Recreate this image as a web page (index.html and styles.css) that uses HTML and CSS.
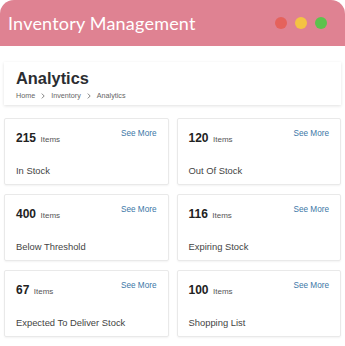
FILE: index.html
```html
<!DOCTYPE html>
<html lang="en">
<head>
    <meta charset="UTF-8">
    <meta name="viewport" content="width=device-width, initial-scale=1.0">
    <title>Inventory Management - Analytics</title>
    <link rel="stylesheet" href="styles.css">
</head>
<body>
    <div class="window">
        <div class="titlebar">
            <span class="app-title">Inventory Management</span>
            <div class="dots">
                <span class="dot red"></span>
                <span class="dot yellow"></span>
                <span class="dot green"></span>
            </div>
        </div>

        <div class="content">
            <div class="page-head">
                <h1>Analytics</h1>
                <div class="crumbs">
                    <span>Home</span>
                    <svg class="chev" width="4" height="6" viewBox="0 0 4 6"><polyline points="0.8,0.6 3.2,3 0.8,5.4" fill="none" stroke="#777" stroke-width="0.9"/></svg>
                    <span>Inventory</span>
                    <svg class="chev" width="4" height="6" viewBox="0 0 4 6"><polyline points="0.8,0.6 3.2,3 0.8,5.4" fill="none" stroke="#777" stroke-width="0.9"/></svg>
                    <span>Analytics</span>
                </div>
            </div>

            <div class="stats">
                <div class="stat-card">
                    <div class="stat-top">
                        <div class="count"><b>215</b> <span>Items</span></div>
                        <a href="#" class="more">See More</a>
                    </div>
                    <div class="label">In Stock</div>
                </div>
                <div class="stat-card">
                    <div class="stat-top">
                        <div class="count"><b>120</b> <span>Items</span></div>
                        <a href="#" class="more">See More</a>
                    </div>
                    <div class="label">Out Of Stock</div>
                </div>
                <div class="stat-card">
                    <div class="stat-top">
                        <div class="count"><b>400</b> <span>Items</span></div>
                        <a href="#" class="more">See More</a>
                    </div>
                    <div class="label">Below Threshold</div>
                </div>
                <div class="stat-card">
                    <div class="stat-top">
                        <div class="count"><b>116</b> <span>Items</span></div>
                        <a href="#" class="more">See More</a>
                    </div>
                    <div class="label">Expiring Stock</div>
                </div>
                <div class="stat-card">
                    <div class="stat-top">
                        <div class="count"><b>67</b> <span>Items</span></div>
                        <a href="#" class="more">See More</a>
                    </div>
                    <div class="label">Expected To Deliver Stock</div>
                </div>
                <div class="stat-card">
                    <div class="stat-top">
                        <div class="count"><b>100</b> <span>Items</span></div>
                        <a href="#" class="more">See More</a>
                    </div>
                    <div class="label">Shopping List</div>
                </div>
            </div>
        </div>
    </div>
</body>
</html>
```

FILE: styles.css
```css
body {
    margin: 0;
    background-color: #fff;
    font-family: 'Liberation Sans', Arial, sans-serif;
    color: #333;
}
.window {
    width: 345px;
    height: 346px;
    overflow: hidden;
}
.titlebar {
    height: 46px;
    background-color: #df8292;
    border-radius: 14px 14px 0 0;
    display: flex;
    align-items: center;
    justify-content: space-between;
    padding: 0 18px 0 8px;
}
.app-title {
    font-family: 'Lato', sans-serif;
    font-size: 18px;
    color: #fff;
    letter-spacing: 0.2px;
}
.dots {
    display: flex;
    gap: 8px;
}
.dot {
    width: 12px;
    height: 12px;
    border-radius: 50%;
}
.red { background-color: #e5625c; }
.yellow { background-color: #f4c343; }
.green { background-color: #5cc24d; }

.content {
    padding: 16px 4px 0;
}
.page-head {
    height: 43px;
    box-sizing: border-box;
    padding: 6px 12px 0;
    background-color: #fff;
    box-shadow: 0 1px 3px rgba(0,0,0,0.12);
}
h1 {
    margin: 0;
    font-size: 16.4px;
    line-height: 20px;
    font-weight: bold;
    color: #2b2d31;
}
.crumbs {
    margin-top: 3px;
    display: flex;
    align-items: center;
    gap: 6px;
    font-size: 7.2px;
    line-height: 9px;
    color: #666;
}
.stats {
    margin-top: 13px;
    display: grid;
    grid-template-columns: 1fr 1fr;
    column-gap: 8px;
    row-gap: 9px;
}
.stat-card {
    height: 67px;
    box-sizing: border-box;
    border: 1px solid #e9e9e9;
    border-radius: 2px;
    box-shadow: 0 1px 2px rgba(0,0,0,0.05);
    padding: 10px 11px 7px;
    display: flex;
    flex-direction: column;
    justify-content: space-between;
}
.stat-top {
    display: flex;
    justify-content: space-between;
    align-items: flex-start;
}
.count {
    line-height: 16px;
}
.count b {
    font-size: 12px;
    color: #222;
}
.count span {
    font-size: 8px;
    color: #555;
}
.more {
    font-size: 8.2px;
    line-height: 10px;
    color: #3b76a6;
    text-decoration: none;
}
.label {
    font-size: 9.4px;
    line-height: 12px;
    color: #444;
}
```
